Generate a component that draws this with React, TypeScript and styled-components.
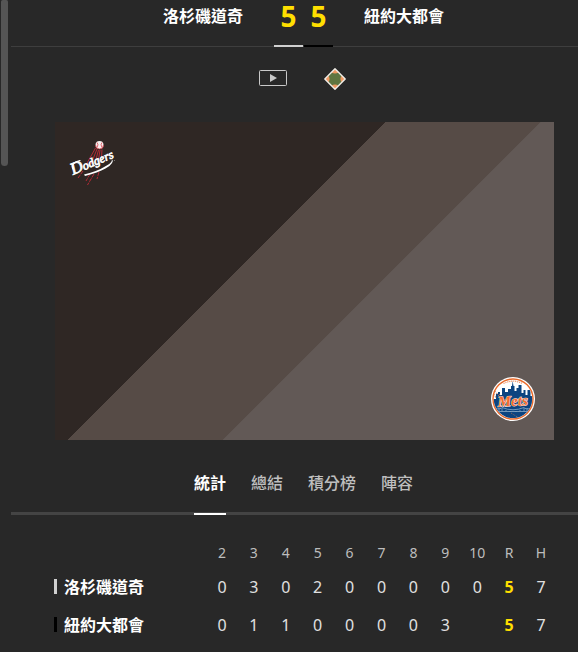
import React, { useState } from "react";
import styled, { createGlobalStyle } from "styled-components";

const GlobalStyle = createGlobalStyle`
  *, *::before, *::after { box-sizing: border-box; }
  html, body { margin: 0; background: #282828; overflow: hidden; }
  body {
    color: #fff;
    font-family: "Noto Sans", "Noto Sans CJK TC", sans-serif;
    font-size: 16px;
    line-height: 24px;
  }
`;

const Shell = styled.div`
  display: grid;
  grid-template-columns: 11px minmax(0, 1fr);
`;

const ScrollRail = styled.div`
  padding-left: 1px;
`;

const ScrollThumb = styled.div`
  width: 7px;
  height: 166px;
  border-radius: 2px 2px 4px 4px;
  background: #555;
`;

const Panel = styled.main`
  min-width: 0;
`;

const ScoreHeader = styled.header`
  display: grid;
  grid-template-columns: 1fr auto 1fr;
  column-gap: 31px;
  height: 47px;
  padding-left: 18px;
  border-bottom: 1px solid #3e3e3e;
`;

const TeamTitle = styled.h2<{ $side: "home" | "away" }>`
  margin: 0;
  padding-top: 3px;
  font-family: "Noto Sans CJK TC", sans-serif;
  font-size: 16px;
  font-weight: 700;
  line-height: 24px;
  text-align: ${(p) => (p.$side === "away" ? "right" : "left")};
  white-space: nowrap;
`;

const Scores = styled.div`
  display: flex;
  gap: 1px;
  height: 47px;
`;

const Score = styled.span<{ $accent: string }>`
  width: 29px;
  height: 47px;
  border-bottom: 2px solid ${(p) => p.$accent};
  color: #ffdf00;
  font-family: "Open Sans", sans-serif;
  font-size: 28px;
  font-weight: 700;
  line-height: 32px;
  text-align: center;
`;

const MediaBar = styled.div`
  display: flex;
  align-items: center;
  justify-content: center;
  gap: 36px;
  height: 64px;
  padding-left: 16px;
`;

const IconButton = styled.button`
  display: block;
  padding: 0;
  border: 0;
  background: none;
  cursor: pointer;

  svg { display: block; }
`;

const Banner = styled.section`
  display: flex;
  justify-content: space-between;
  height: 318px;
  margin: 11px 24px 0 44px;
  padding: 18px 19px 19px 16px;
  background: linear-gradient(
    135deg,
    #2f2724 40.4%,
    #564b46 40.5%,
    #564b46 59.4%,
    #625956 59.5%
  );
`;

const Logo = styled.svg<{ $end?: boolean }>`
  display: block;
  align-self: ${(p) => (p.$end ? "flex-end" : "flex-start")};
  overflow: visible;
`;

const Tabs = styled.nav`
  display: flex;
  justify-content: center;
  gap: 25px;
  height: 75px;
  padding: 31px 0 0 18px;
  border-bottom: 3px solid #444;
`;

const Tab = styled.button<{ $active: boolean }>`
  height: 44px;
  padding: 0 0 20px;
  border: 0;
  border-bottom: 2px solid ${(p) => (p.$active ? "#fff" : "transparent")};
  background: none;
  color: ${(p) => (p.$active ? "#fff" : "#bfbfbf")};
  font-family: "Noto Sans CJK TC", sans-serif;
  font-size: 16px;
  font-weight: ${(p) => (p.$active ? 700 : 500)};
  line-height: 22px;
  white-space: nowrap;
  cursor: pointer;
`;

const LineScore = styled.table`
  width: calc(100% - 64px);
  margin: 26px 21px 0 43px;
  border-collapse: collapse;
  table-layout: fixed;
`;

const NameHead = styled.th`
  width: 152px;
  padding: 0;
`;

const InningHead = styled.th`
  height: 27px;
  padding: 0 0 4px;
  color: #bdbdbd;
  font-size: 14px;
  font-weight: 400;
  line-height: 22px;
  text-align: center;
`;

const TeamCell = styled.th`
  height: 38px;
  padding: 0 0 2px;
`;

const TeamName = styled.div<{ $accent: string }>`
  display: flex;
  align-items: center;
  gap: 7px;
  font-family: "Noto Sans CJK TC", sans-serif;
  font-size: 16px;
  font-weight: 700;
  white-space: nowrap;

  &::before {
    content: "";
    width: 3px;
    height: 15px;
    background: ${(p) => p.$accent};
  }
`;

const ValueCell = styled.td<{ $total: boolean }>`
  padding: 0;
  color: ${(p) => (p.$total ? "#ffdf00" : "#e0e0e0")};
  font-family: ${(p) => (p.$total ? '"Open Sans"' : '"Noto Sans"')}, sans-serif;
  font-weight: ${(p) => (p.$total ? 700 : 400)};
  text-align: center;
`;

function VideoIcon() {
  return (
    <svg width="28" height="18" viewBox="0 0 28 18" aria-hidden="true">
      <rect x="0.5" y="0.5" width="27" height="15" rx="1" fill="none" stroke="#c9c9c9" />
      <path d="M11 4v8l7-4z" fill="#c9c9c9" />
    </svg>
  );
}

function FieldIcon() {
  return (
    <svg width="24" height="24" viewBox="0 0 24 24" aria-hidden="true">
      <defs>
        <clipPath id="diamond">
          <path d="M12 2 22 12 12 22 2 12z" />
        </clipPath>
      </defs>
      <g clipPath="url(#diamond)">
        <rect width="24" height="24" fill="#5f7540" />
        <circle cx="12" cy="2" r="4.6" fill="#ef9962" />
        <circle cx="22" cy="12" r="4.6" fill="#ef9962" />
        <circle cx="12" cy="22" r="4.6" fill="#ef9962" />
        <circle cx="2" cy="12" r="4.6" fill="#ef9962" />
      </g>
      <path
        d="M12 1.8 22.2 12 12 22.2 1.8 12z"
        fill="none"
        stroke="#f1eee8"
        strokeWidth="1.4"
        strokeLinejoin="round"
      />
    </svg>
  );
}

function DodgersLogo() {
  return (
    <Logo width="44" height="46" viewBox="0 0 44 46" role="img" aria-label="Dodgers">
      <g fill="none" stroke="#b52a35" strokeWidth="1">
        <path d="M24.5 8 15 25M26 9 20 24M27.5 10 24 23M29 10 27.5 20M31 9.5 30.5 18" />
        <path d="M12 31 7 38M19 34 15 41M23 34 16.5 45M28 32 26 39" strokeDasharray="4 1" />
      </g>
      <circle cx="28.5" cy="5" r="4" fill="#f7eeee" />
      <path
        d="M26 2.5q2 2 0 5M31 2.5q-2 2 0 5M24.5 5a4 4 0 0 0 8 0"
        fill="none"
        stroke="#d43d49"
        strokeWidth="0.8"
      />
      <text
        transform="translate(2 35) rotate(-23)"
        fill="#fff"
        stroke="#fff"
        strokeWidth="0.7"
        fontFamily="Liberation Serif, serif"
        fontStyle="italic"
      >
        <tspan fontSize="17">D</tspan>
        <tspan fontSize="12">odgers</tspan>
      </text>
      <path
        d="M2 29Q-1 23 9 20.5"
        fill="none"
        stroke="#fff"
        strokeWidth="1.2"
        strokeLinecap="round"
      />
      <path d="M13 34.5Q27 31 34 26.5 43 22.5 40.5 18 44.5 23 34.5 28.5 27 32.5 14 36z" fill="#fff" />
      <circle cx="43.3" cy="20.5" r="0.4" fill="#ddd" />
    </Logo>
  );
}

function MetsLogo() {
  return (
    <Logo $end width="44" height="44" viewBox="0 0 44 44" role="img" aria-label="New York Mets">
      <defs>
        <clipPath id="mets-disc">
          <circle cx="22" cy="22" r="19.2" />
        </clipPath>
      </defs>
      <circle cx="22" cy="22" r="22" fill="#fff" />
      <circle cx="22" cy="22" r="20" fill="#fff" stroke="#e96a2a" strokeWidth="1.4" />
      <path
        d="M12.5 6.5Q22 1.8 31.5 6.5"
        fill="none"
        stroke="#f09a70"
        strokeWidth="1.3"
        strokeDasharray="1.2 0.8"
      />
      <g clipPath="url(#mets-disc)">
        <path
          d="M2 22h3v-5h2v-2h2v3h2v-7h3v4h3v-3h3V9h1l.7-5 .8 5h1v5h2v-3h2v-3h3v8h2v-3h2v5h2v-5h3v6h3v22H2z"
          fill="#0c4480"
        />
        <path d="M3 17l2 4M4 14l7 9M8 17l8 8" fill="none" stroke="#aa6552" strokeWidth="1" strokeDasharray="1.5 1" />
        <path
          d="M4 31.5Q10 32.5 11 30.5 22 35 33 30.5 34 32.5 41 31.5M5 34.5h34"
          fill="none"
          stroke="#8fadc8"
          strokeWidth="0.8"
        />
        <path d="M8 34v-3M11 34v-3M15 34v-1M19 35v-1M25 35v-1M29 34v-1M33 34v-3M36 34v-3" stroke="#8fadc8" strokeWidth="0.7" />
        <path d="M20 36l8 5" stroke="#8f6962" strokeWidth="1" strokeDasharray="1 1" />
      </g>
      <text
        transform="translate(22 29) rotate(-3)"
        textAnchor="middle"
        fill="#f36b2c"
        stroke="#fbe3d8"
        strokeWidth="1"
        paintOrder="stroke"
        fontFamily="Liberation Serif, serif"
        fontStyle="italic"
        fontWeight="700"
        fontSize="15"
      >
        Mets
      </text>
    </Logo>
  );
}

const innings = ["2", "3", "4", "5", "6", "7", "8", "9", "10", "R", "H"];

const teams = [
  {
    name: "洛杉磯道奇",
    accent: "#d0d0d0",
    values: ["0", "3", "0", "2", "0", "0", "0", "0", "0", "5", "7"],
  },
  {
    name: "紐約大都會",
    accent: "#000",
    values: ["0", "1", "1", "0", "0", "0", "0", "3", "", "5", "7"],
  },
];

const tabs = ["統計", "總結", "積分榜", "陣容"];

export default function App() {
  const [activeTab, setActiveTab] = useState(tabs[0]);

  return (
    <>
      <GlobalStyle />
      <Shell>
        <ScrollRail aria-hidden="true">
          <ScrollThumb />
        </ScrollRail>
        <Panel>
          <ScoreHeader>
            <TeamTitle $side="away">{teams[0].name}</TeamTitle>
            <Scores>
              <Score $accent={teams[0].accent}>5</Score>
              <Score $accent={teams[1].accent}>5</Score>
            </Scores>
            <TeamTitle $side="home">{teams[1].name}</TeamTitle>
          </ScoreHeader>
          <MediaBar>
            <IconButton type="button" aria-label="影片">
              <VideoIcon />
            </IconButton>
            <IconButton type="button" aria-label="球場">
              <FieldIcon />
            </IconButton>
          </MediaBar>
          <Banner>
            <DodgersLogo />
            <MetsLogo />
          </Banner>
          <Tabs>
            {tabs.map((tab) => (
              <Tab
                key={tab}
                type="button"
                $active={tab === activeTab}
                aria-pressed={tab === activeTab}
                onClick={() => setActiveTab(tab)}
              >
                {tab}
              </Tab>
            ))}
          </Tabs>
          <LineScore>
            <thead>
              <tr>
                <NameHead aria-label="球隊" />
                {innings.map((inning) => (
                  <InningHead key={inning} scope="col">
                    {inning}
                  </InningHead>
                ))}
              </tr>
            </thead>
            <tbody>
              {teams.map((team) => (
                <tr key={team.name}>
                  <TeamCell scope="row">
                    <TeamName $accent={team.accent}>{team.name}</TeamName>
                  </TeamCell>
                  {team.values.map((value, i) => (
                    <ValueCell key={innings[i]} $total={innings[i] === "R"}>
                      {value}
                    </ValueCell>
                  ))}
                </tr>
              ))}
            </tbody>
          </LineScore>
        </Panel>
      </Shell>
    </>
  );
}
